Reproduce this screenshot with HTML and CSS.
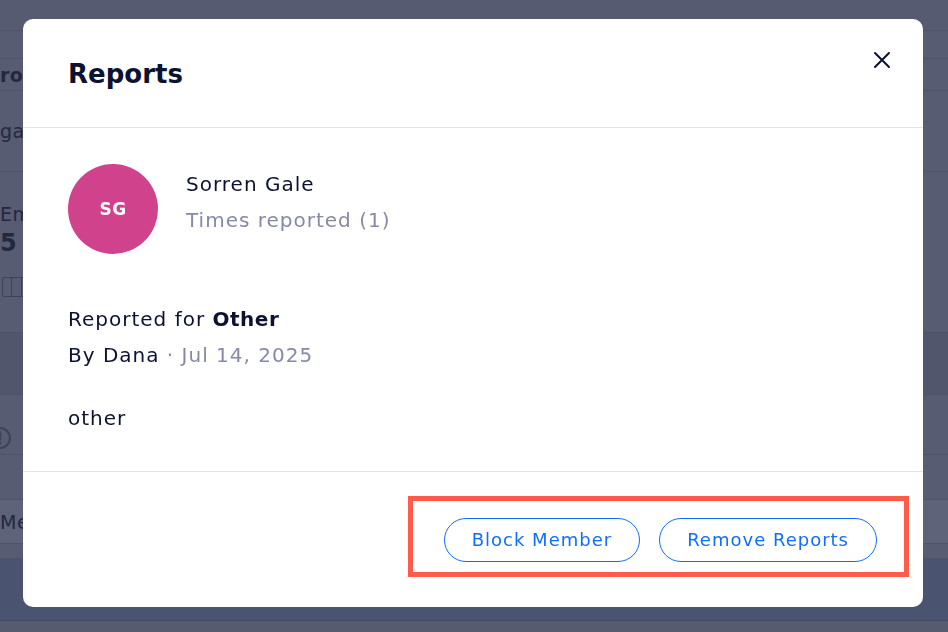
FILE: index.html
```html
<!DOCTYPE html>
<html lang="en">
<head>
<meta charset="utf-8">
<title>Reports</title>
<link rel="stylesheet" href="styles.css">
</head>
<body>
<div class="page">
  <div class="row r-a"></div>
  <div class="row r-b"></div>
  <div class="row r-c"><span class="bg-text bold">row</span></div>
  <div class="row r-d"><span class="bg-text">gar</span></div>
  <div class="row r-e">
    <span class="bg-text em">Em</span>
    <span class="bg-num">5</span>
    <span class="bg-table"><i></i><i></i><i></i></span>
  </div>
  <div class="row r-f"></div>
  <div class="row r-g">
    <svg class="bg-alert" width="24" height="24" viewBox="0 0 24 24"><circle cx="12" cy="12" r="10" fill="none" stroke="#3e4259" stroke-width="2"/><path d="M12 6.5 V13.5" stroke="#3e4259" stroke-width="2.4" stroke-linecap="round"/><circle cx="12" cy="17" r="1.4" fill="#3e4259"/></svg>
  </div>
  <div class="row r-h"></div>
  <div class="row r-i"><span class="bg-text">Mer</span></div>
  <div class="row r-j"></div>
  <div class="row r-k"></div>
  <div class="row r-l"></div>
</div>

<div class="overlay">
  <div class="modal">
    <div class="modal-header">
      <h1 class="modal-title">Reports</h1>
      <button class="close-btn" aria-label="Close">
        <svg width="18" height="18" viewBox="0 0 18 18"><path d="M2 2 L16 16 M16 2 L2 16" stroke="#0c1230" stroke-width="2" stroke-linecap="round" fill="none"/></svg>
      </button>
    </div>
    <div class="modal-body">
      <div class="member">
        <div class="avatar">SG</div>
        <div class="member-info">
          <div class="member-name">Sorren Gale</div>
          <div class="member-meta">Times reported (1)</div>
        </div>
      </div>
      <div class="report">
        <div class="report-line">Reported for <strong>Other</strong></div>
        <div class="report-line">By Dana <span class="muted">· Jul 14, 2025</span></div>
        <div class="report-text">other</div>
      </div>
    </div>
    <div class="modal-footer">
      <button class="btn">Block Member</button>
      <button class="btn">Remove Reports</button>
      <div class="highlight"></div>
    </div>
  </div>
</div>
</body>
</html>
```

FILE: styles.css
```css
* { box-sizing: border-box; }
html, body { margin: 0; padding: 0; }
body {
  width: 948px;
  height: 632px;
  overflow: hidden;
  background: #585c72;
  font-family: "DejaVu Sans", "Noto Sans", sans-serif;
}

/* dimmed background page */
.page { display: flex; flex-direction: column; }
.row {
  border-bottom: 1px solid #4f5369;
  display: flex;
  align-items: center;
  overflow: hidden;
  position: relative;
}
.r-a { height: 31px; background: #575b71; }
.r-b { height: 28px; background: #585c72; }
.r-c { height: 32px; }
.r-d { height: 81px; }
.r-e { height: 161px; flex-direction: column; align-items: flex-start; justify-content: flex-start; padding-top: 31px; }
.r-f { height: 62px; background: #51566c; }
.r-g { height: 60px; align-items: flex-end; padding-bottom: 4px; }
.r-h { height: 45px; }
.r-i { height: 44px; background: #5e6379; }
.r-j { height: 15px; }
.r-k { height: 62px; background: #4a536f; border-bottom: 1px solid #3f4865; }
.r-l { height: 20px; background: #575b70; border-bottom: 0; }

.bg-text {
  font-size: 19px;
  letter-spacing: 0.5px;
  color: #24283d;
  margin-left: 0;
  white-space: nowrap;
}
.bg-text.bold { font-weight: 600; }
.bg-num { font-size: 24px; font-weight: 700; color: #24283d; margin-left: 0; line-height: 36px; }
.bg-table {
  display: flex;
  margin-top: 16px;
  margin-left: 2px;
  width: 30px;
  height: 20px;
  border: 1.5px solid #3e4259;
  border-radius: 2px;
}
.bg-table i { flex: 1; border-right: 1.5px solid #3e4259; }
.bg-alert { margin-left: -12px; }

/* modal */
.overlay {
  position: fixed;
  inset: 0;
  padding: 19px 0 0 23px;
}
.modal {
  width: 900px;
  height: 588px;
  background: #fff;
  border-radius: 10px;
  display: flex;
  flex-direction: column;
  color: #0c1230;
}
.modal-header {
  height: 109px;
  flex: none;
  border-bottom: 1px solid #dfe5eb;
  display: flex;
  align-items: center;
  justify-content: space-between;
  padding: 0 29px 0 45px;
}
.modal-title {
  margin: 0;
  font-size: 26px;
  font-weight: 700;
  padding-top: 2px;
}
.close-btn {
  align-self: flex-start;
  margin-top: 29px;
  width: 24px; height: 24px;
  padding: 0;
  border: 0;
  background: none;
  display: flex; align-items: center; justify-content: center;
}

.modal-body {
  flex: 1;
  padding: 36px 45px 0;
  font-size: 20px;
  line-height: 36px;
  letter-spacing: 1px;
}
.member { display: flex; gap: 28px; }
.avatar {
  width: 90px; height: 90px;
  border-radius: 50%;
  background: #d1428c;
  color: #fff;
  font-size: 17px;
  font-weight: 700;
  letter-spacing: 0.5px;
  display: flex; align-items: center; justify-content: center;
}
.member-info { padding-top: 2px; }
.member-meta, .muted { color: #868aa5; }
.report { margin-top: 46px; }
.report-line:first-child { padding-top: 1px; }
.report-text { margin-top: 27px; }
.report strong { font-weight: 700; letter-spacing: 0.5px; }

.modal-footer {
  height: 136px;
  flex: none;
  border-top: 1px solid #dfe5eb;
  display: flex;
  justify-content: flex-end;
  align-items: center;
  gap: 19px;
  padding-right: 46px;
  position: relative;
}
.btn {
  height: 44px;
  padding: 0 27px;
  border: 1px solid #116dff;
  border-radius: 22px;
  background: #fff;
  color: #116dff;
  font-family: inherit;
  font-size: 18px;
  letter-spacing: 1px;
  line-height: 1;
}
.highlight {
  position: absolute;
  left: 385px;
  top: 24px;
  width: 501px;
  height: 81px;
  border: 5px solid #fe5b4b;
  pointer-events: none;
}
```
